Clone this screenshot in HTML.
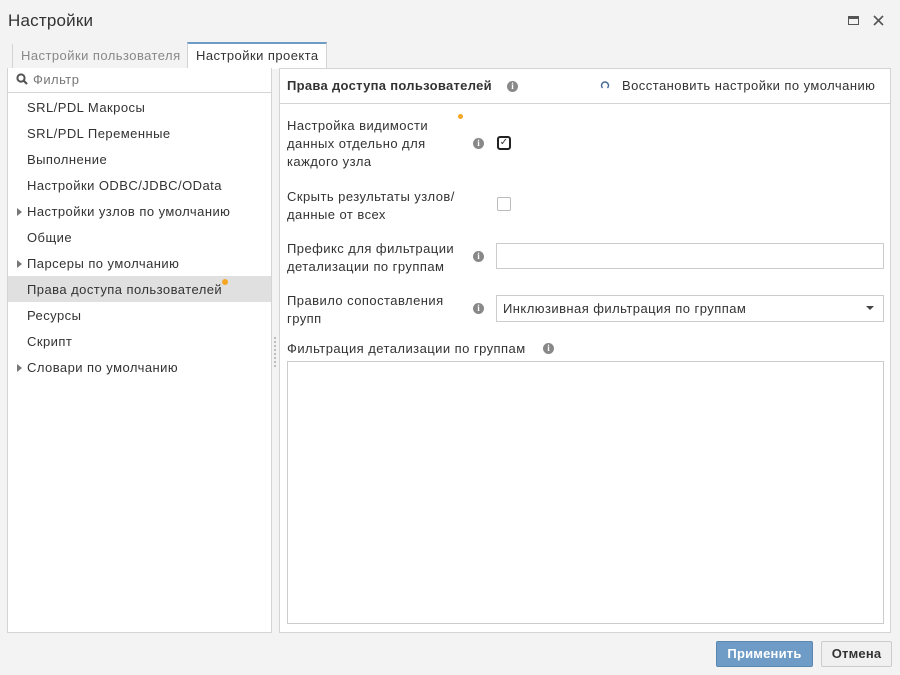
<!DOCTYPE html>
<html><head><meta charset="utf-8"><style>
*{box-sizing:border-box;margin:0;padding:0}
body{width:900px;height:675px;background:#f3f3f3;font-family:"Liberation Sans","DejaVu Sans",sans-serif;font-size:13px;letter-spacing:0.45px;color:#333;position:relative;overflow:hidden}
.a{position:absolute;white-space:nowrap}
.panel{position:absolute;background:#fff;border:1px solid #d4d4d4}
.info{position:absolute;width:11px;height:11px;border-radius:50%;background:#888;color:#fff;font-size:9px;font-weight:bold;text-align:center;line-height:11px;font-family:"Liberation Serif",serif;letter-spacing:0}
.tri{position:absolute;width:0;height:0;border-left:5px solid #777;border-top:4px solid transparent;border-bottom:4px solid transparent}
.dot{position:absolute;width:6px;height:6px;border-radius:50%;background:#f5a623}
</style></head><body>
<div class="a" style="left:8px;top:11px;font-size:17px;letter-spacing:0.2px;color:#333">Настройки</div>
<div class="a" style="left:848px;top:16px;width:11px;height:9px;border:1.5px solid #555;border-top-width:3px"></div>
<svg class="a" style="left:873px;top:15px" width="11" height="11" viewBox="0 0 11 11"><path d="M1 1L10 10M10 1L1 10" stroke="#555" stroke-width="1.6"/></svg>
<!-- tabs -->
<div class="a" style="left:12px;top:44px;width:175px;height:24px;border-left:1px solid #d4d4d4;color:#888;padding:4px 0 0 8px">Настройки пользователя</div>
<div class="a" style="left:187px;top:42px;width:140px;height:27px;background:#fff;border:1px solid #d4d4d4;border-top:2px solid #6e9cc6;border-bottom:none;padding:4px 0 0 8px">Настройки проекта</div>
<!-- left -->
<div class="panel" style="left:7px;top:68px;width:265px;height:565px;border-top:none">
 <div style="height:25px;border-bottom:1px solid #d4d4d4;position:relative">
  <svg class="a" style="left:8px;top:5px" width="12" height="12" viewBox="0 0 12 12"><circle cx="5" cy="5" r="3.6" fill="none" stroke="#555" stroke-width="2"/><line x1="7.5" y1="7.5" x2="11" y2="11" stroke="#555" stroke-width="2.2"/></svg>
  <div class="a" style="left:25px;top:4px;color:#777">Фильтр</div>
 </div>
</div>
<div class="a" style="left:27px;top:100px">SRL/PDL Макросы</div>
<div class="a" style="left:27px;top:126px">SRL/PDL Переменные</div>
<div class="a" style="left:27px;top:152px">Выполнение</div>
<div class="a" style="left:27px;top:178px">Настройки ODBC/JDBC/OData</div>
<div class="tri" style="left:17px;top:208px"></div><div class="a" style="left:27px;top:204px">Настройки узлов по умолчанию</div>
<div class="a" style="left:27px;top:230px">Общие</div>
<div class="tri" style="left:17px;top:260px"></div><div class="a" style="left:27px;top:256px">Парсеры по умолчанию</div>
<div class="a" style="left:8px;top:276px;width:263px;height:26px;background:#e0e0e0"></div>
<div class="a" style="left:27px;top:282px">Права доступа пользователей</div><div class="dot" style="left:222px;top:279px"></div>
<div class="a" style="left:27px;top:308px">Ресурсы</div>
<div class="a" style="left:27px;top:334px">Скрипт</div>
<div class="tri" style="left:17px;top:364px"></div><div class="a" style="left:27px;top:360px">Словари по умолчанию</div>
<div class="a" style="left:274px;top:337px;width:2px;height:30px;border-left:2px dotted #bbb"></div>
<!-- right -->
<div class="panel" style="left:279px;top:68px;width:612px;height:565px">
 <div style="height:35px;border-bottom:1px solid #d4d4d4"></div>
</div>
<div class="a" style="left:287px;top:78px;font-weight:bold;letter-spacing:0.3px">Права доступа пользователей</div>
<div class="info" style="left:507px;top:81px">i</div>
<svg class="a" style="left:600px;top:80px" width="10" height="10" viewBox="0 0 10 10"><path d="M2.5 8A3.5 3.5 0 1 1 7.5 8" fill="none" stroke="#4a6e95" stroke-width="1.5"/></svg>
<div class="a" style="left:622px;top:78px">Восстановить настройки по умолчанию</div>
<div class="dot" style="left:458px;top:114px;width:5px;height:5px"></div>
<div class="a" style="left:287px;top:117px;line-height:18px">Настройка видимости<br>данных отдельно для<br>каждого узла</div>
<div class="info" style="left:473px;top:138px">i</div>
<div class="a" style="left:497px;top:136px;width:14px;height:14px;border:2px solid #222;border-radius:3px;font-size:10px;line-height:10px;text-align:center;letter-spacing:0">✓</div>
<div class="a" style="left:287px;top:188px;line-height:18px">Скрыть результаты узлов/<br>данные от всех</div>
<div class="a" style="left:497px;top:197px;width:14px;height:14px;border:1px solid #bbb;border-radius:2px;background:#fff"></div>
<div class="a" style="left:287px;top:240px;line-height:18px">Префикс для фильтрации<br>детализации по группам</div>
<div class="info" style="left:473px;top:251px">i</div>
<div class="a" style="left:496px;top:243px;width:388px;height:26px;border:1px solid #ccc;background:#fff"></div>
<div class="a" style="left:287px;top:292px;line-height:18px">Правило сопоставления<br>групп</div>
<div class="info" style="left:473px;top:303px">i</div>
<div class="a" style="left:496px;top:295px;width:388px;height:27px;border:1px solid #ccc;background:#fff;padding:5px 0 0 6px">Инклюзивная фильтрация по группам</div>
<div class="a" style="left:866px;top:306px;border-top:4px solid #444;border-left:4px solid transparent;border-right:4px solid transparent"></div>
<div class="a" style="left:287px;top:341px">Фильтрация детализации по группам</div>
<div class="info" style="left:543px;top:343px">i</div>
<div class="a" style="left:287px;top:361px;width:597px;height:263px;border:1px solid #ccc;background:#fff"></div>
<!-- buttons -->
<div class="a" style="left:716px;top:641px;width:97px;height:26px;background:#6e9cc6;border:1px solid #5a88b3;border-radius:2px;color:#fff;font-weight:bold;text-align:center;line-height:24px;letter-spacing:0.2px">Применить</div>
<div class="a" style="left:821px;top:641px;width:71px;height:26px;background:#f0f0f0;border:1px solid #ccc;border-radius:2px;color:#333;font-weight:bold;text-align:center;line-height:24px;letter-spacing:0.2px">Отмена</div>
</body></html>
